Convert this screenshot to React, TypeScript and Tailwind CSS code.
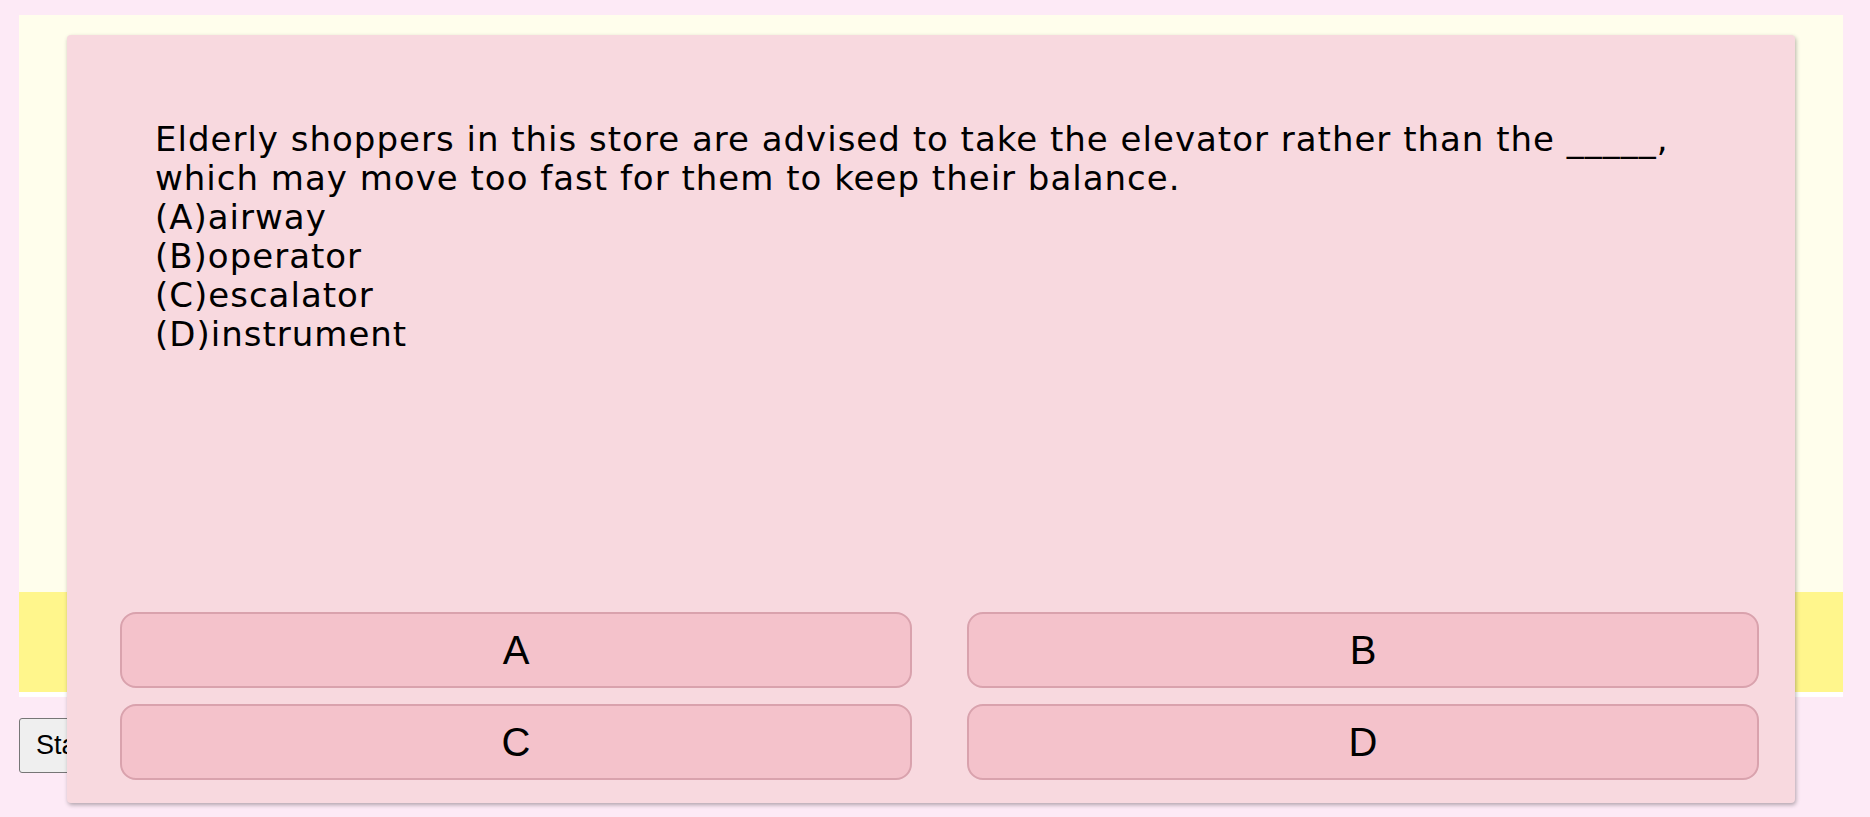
import React from "react";

const options = ["(A)airway", "(B)operator", "(C)escalator", "(D)instrument"];

const AnswerButton = ({ label }: { label: string }) => {
  return (
    <button className="h-[76px] rounded-[16px] border-2 border-[#d9a2ad] bg-[#f4c2cb] text-[40px] text-black [font-family:'Liberation_Sans',Arial,sans-serif]">
      {label}
    </button>
  );
};

export default function App() {
  return (
    <div className="min-h-[817px] w-full bg-[#fdeaf6] pt-[15px] pl-[19px] pr-[27px]">
      <div className="relative">
        {/* background board behind the card */}
        <div className="flex h-[682px] flex-col bg-white">
          <div className="h-[577px] bg-[#fffeec]"></div>
          <div className="h-[100px] bg-[#fff68c]"></div>
        </div>
        <button className="mt-[21px] h-[55px] rounded-[3px] border border-[#767676] bg-[#efefef] px-[16px] text-[27px] text-black [font-family:'Liberation_Sans',Arial,sans-serif]">
          Start
        </button>

        {/* question card over the board */}
        <div className="absolute left-[48px] top-[20px] flex h-[768px] w-[1728px] flex-col rounded-[4px] bg-[#f8d9df] shadow-[1px_2px_4px_rgba(0,0,0,0.3)]">
          <div className="flex-1 pl-[88px] pt-[85px] text-[34px] leading-[39px] tracking-[1px] text-black [font-family:'DejaVu_Sans',sans-serif]">
            <div>
              Elderly shoppers in this store are advised to take the elevator rather than the _____,
              <br />
              which may move too fast for them to keep their balance.
            </div>
            {options.map((o) => (
              <div key={o}>{o}</div>
            ))}
          </div>
          <div className="grid grid-cols-2 gap-x-[55px] gap-y-[16px] pb-[23px] pl-[53px] pr-[36px]">
            <AnswerButton label="A" />
            <AnswerButton label="B" />
            <AnswerButton label="C" />
            <AnswerButton label="D" />
          </div>
        </div>
      </div>
    </div>
  );
}
